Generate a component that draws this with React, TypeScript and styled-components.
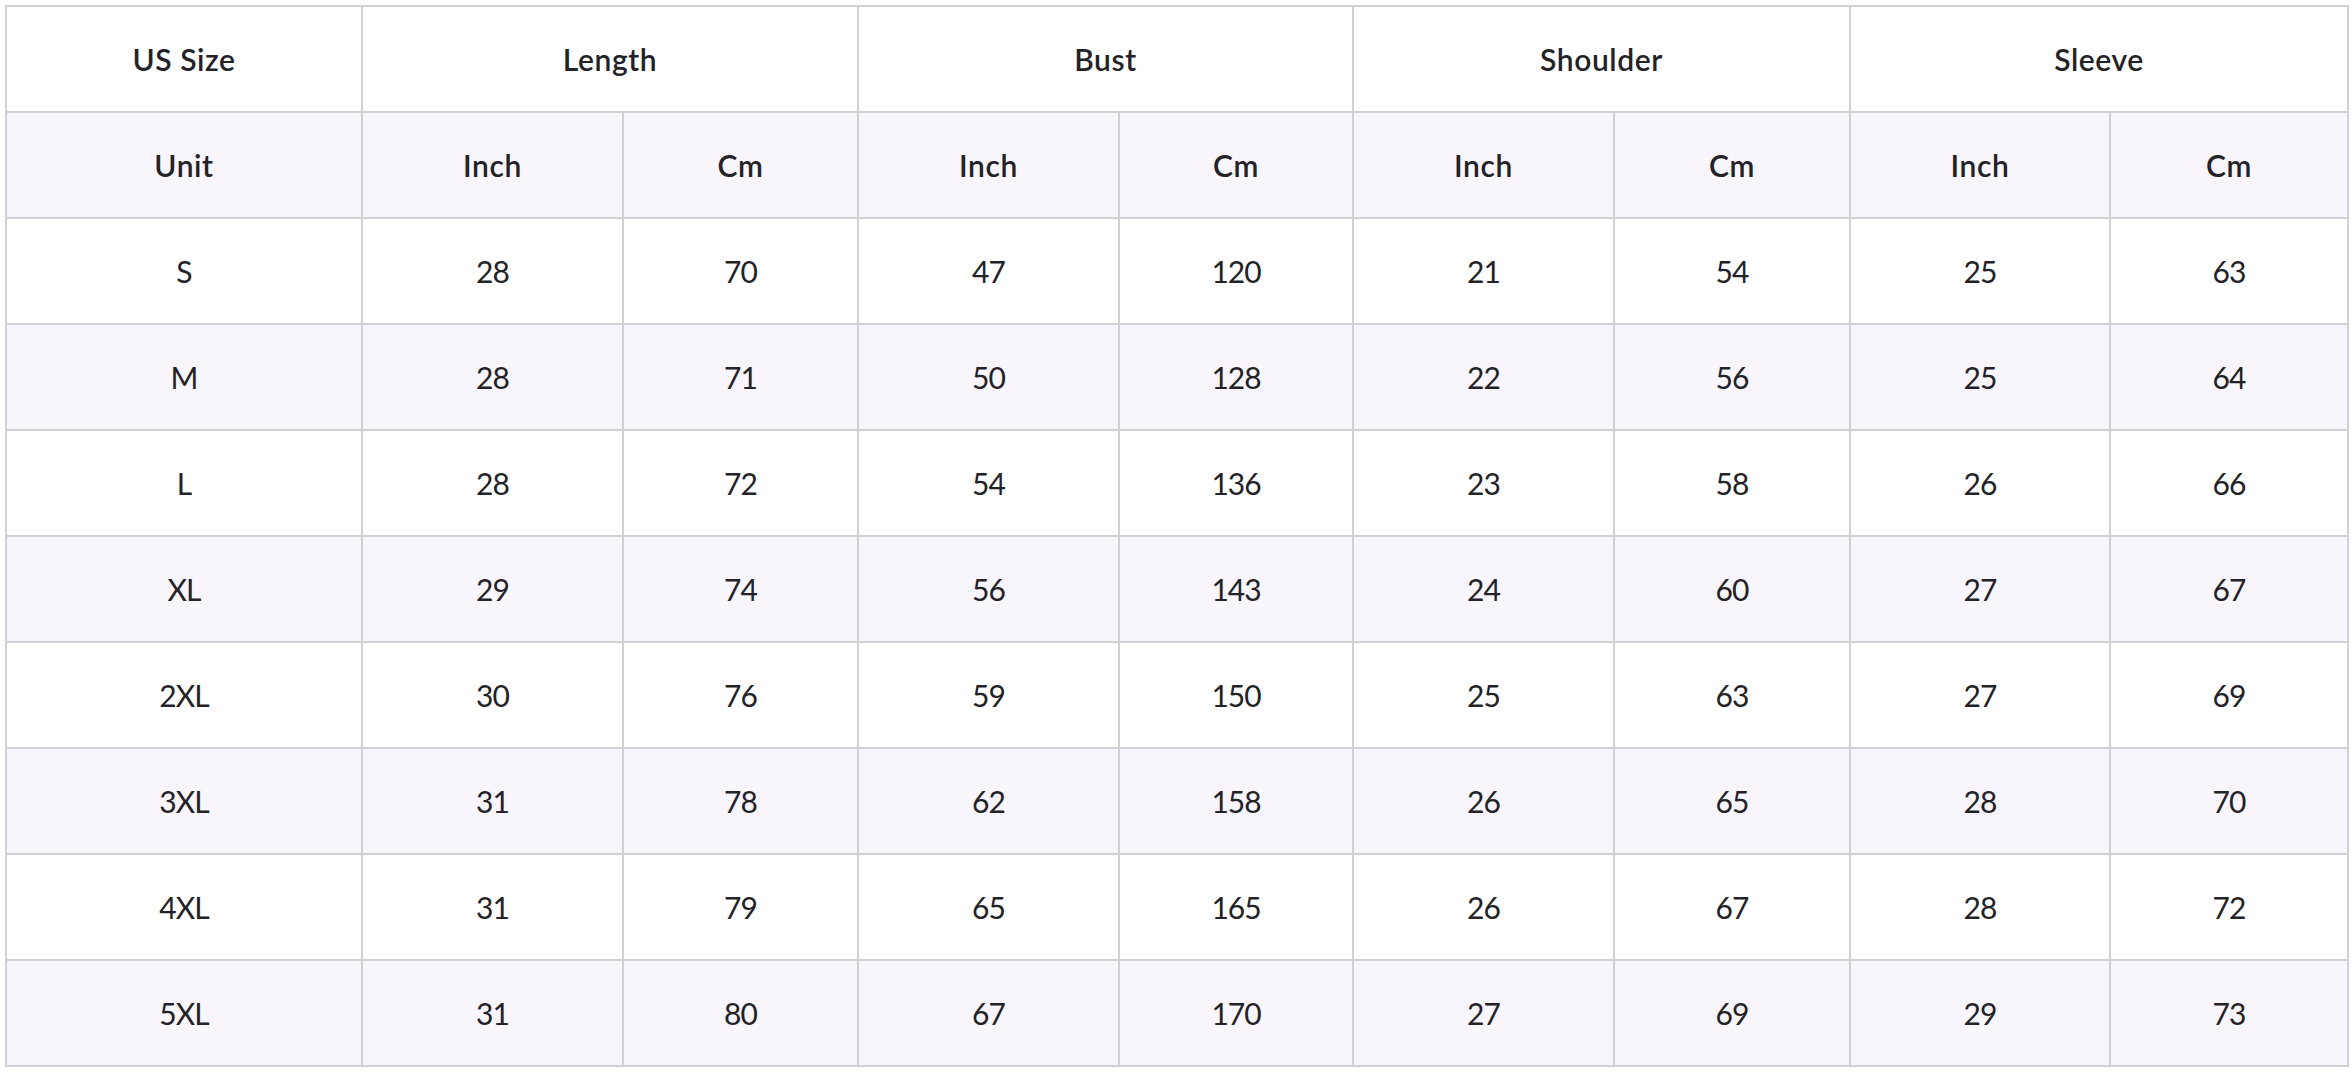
import React from "react";
import styled, { createGlobalStyle } from "styled-components";

const Global = createGlobalStyle`
  html, body { margin: 0; padding: 0; background: #ffffff; }
  body { font-family: Lato, "Open Sans", "Noto Sans", sans-serif; color: #232226; }
`;

const Page = styled.div`
  padding: 5px 5px 0 5px;
`;

const Table = styled.table`
  width: 2342px;
  border-collapse: collapse;
  table-layout: fixed;
  border: 2px solid #d2d0d5;
`;

const Row = styled.tr<{ $shade?: boolean }>`
  height: 106px;
  background: ${(p) => (p.$shade ? "#f8f5fc" : "#ffffff")};
`;

const HeadCell = styled.th`
  border: 2px solid #d2d0d5;
  font-weight: 600;
  font-size: 30px;
  letter-spacing: 0.6px;
  text-align: center;
  vertical-align: middle;
  padding: 0;
  color: #232226;
`;

const Cell = styled.td`
  border: 2px solid #d2d0d5;
  font-weight: 400;
  font-size: 30px;
  letter-spacing: -1px;
  text-align: center;
  vertical-align: middle;
  padding: 0;
  color: #232226;
`;

const widths = [356, 261, 235, 261, 234, 261, 236, 260, 238];

const data: [string, number[]][] = [
  ["S", [28, 70, 47, 120, 21, 54, 25, 63]],
  ["M", [28, 71, 50, 128, 22, 56, 25, 64]],
  ["L", [28, 72, 54, 136, 23, 58, 26, 66]],
  ["XL", [29, 74, 56, 143, 24, 60, 27, 67]],
  ["2XL", [30, 76, 59, 150, 25, 63, 27, 69]],
  ["3XL", [31, 78, 62, 158, 26, 65, 28, 70]],
  ["4XL", [31, 79, 65, 165, 26, 67, 28, 72]],
  ["5XL", [31, 80, 67, 170, 27, 69, 29, 73]],
];

const groups = ["Length", "Bust", "Shoulder", "Sleeve"];

export default function App() {
  return (
    <>
      <Global />
      <Page>
        <Table>
          <colgroup>
            {widths.map((w, i) => (
              <col key={i} style={{ width: w }} />
            ))}
          </colgroup>
          <thead>
            <Row>
              <HeadCell>US Size</HeadCell>
              {groups.map((g) => (
                <HeadCell key={g} colSpan={2}>
                  {g}
                </HeadCell>
              ))}
            </Row>
            <Row $shade>
              <HeadCell>Unit</HeadCell>
              {groups.map((g) => (
                <React.Fragment key={g}>
                  <HeadCell>Inch</HeadCell>
                  <HeadCell>Cm</HeadCell>
                </React.Fragment>
              ))}
            </Row>
          </thead>
          <tbody>
            {data.map(([size, vals], i) => (
              <Row key={size} $shade={i % 2 === 1}>
                <Cell>{size}</Cell>
                {vals.map((v, j) => (
                  <Cell key={j}>{v}</Cell>
                ))}
              </Row>
            ))}
          </tbody>
        </Table>
      </Page>
    </>
  );
}
